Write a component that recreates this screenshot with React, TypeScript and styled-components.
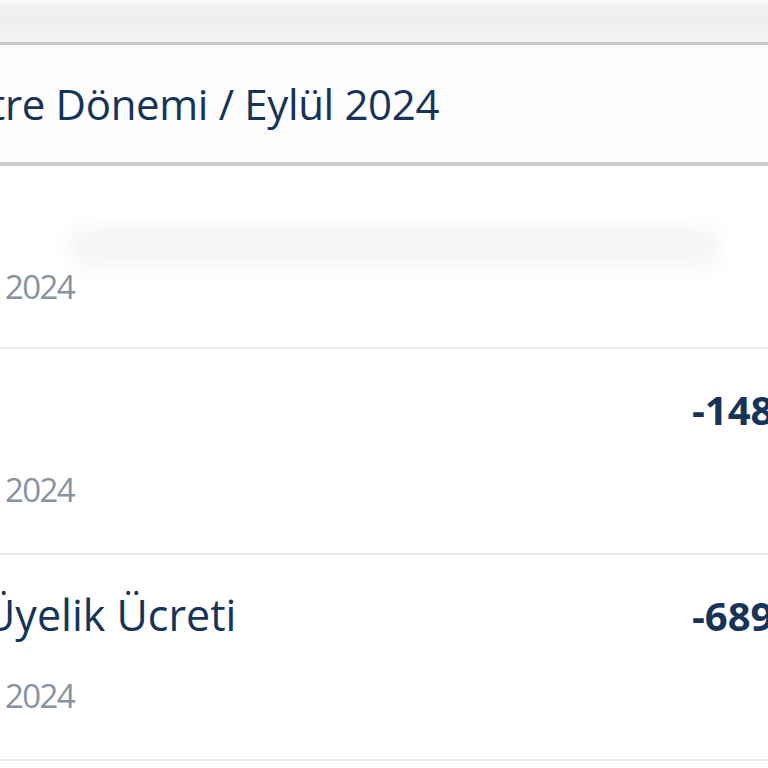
import React from "react";
import styled, { createGlobalStyle } from "styled-components";

const Global = createGlobalStyle`
  html, body { margin: 0; padding: 0; background: #ffffff; }
  body { font-family: "Open Sans", "Noto Sans", sans-serif; }
`;

const Screen = styled.div`
  width: 768px;
  height: 768px;
  overflow: hidden;
  background: #ffffff;
  display: flex;
  flex-direction: column;
`;

const TopStrip = styled.div`
  flex: none;
  height: 42px;
  background: linear-gradient(#fafafa 0px, #eef0f2 8px, #eceef0 20px, #f3f4f5 40px);
  border-bottom: 3px solid #c6c8cc;
`;

const Header = styled.header`
  flex: none;
  height: 117px;
  display: flex;
  align-items: center;
  background: #fdfdfd;
  border-bottom: 4px solid #c9cbce;
  overflow: hidden;
`;

const HeaderTitle = styled.h1`
  margin: 2px 0 0 -74px;
  font-size: 42px;
  line-height: 1.2;
  font-weight: 500;
  letter-spacing: -0.35px;
  color: #163358;
  white-space: nowrap;
`;

const List = styled.div`
  display: flex;
  flex-direction: column;
`;

const Row = styled.div<{ $height: number; $pad: number; $gap: number }>`
  box-sizing: border-box;
  height: ${(p) => p.$height}px;
  padding-top: ${(p) => p.$pad}px;
  border-bottom: 2px solid #ebebeb;
  display: grid;
  grid-template-columns: 692px 1fr;
  grid-template-rows: auto 1fr;
  row-gap: ${(p) => p.$gap}px;
`;

const Ghost = styled.div`
  grid-column: 1 / -1;
  height: 40px;
  margin: 0 48px 0 70px;
  background: #f5f5f6;
  border-radius: 14px;
  filter: blur(9px);
`;

const Title = styled.div`
  font-size: 43px;
  line-height: 1.2;
  font-weight: 500;
  color: #163358;
  white-space: nowrap;
  margin-left: -16px;
  min-height: 52px;
`;

const Amount = styled.div`
  margin-top: 3px;
  font-size: 40px;
  line-height: 1.2;
  font-weight: 700;
  color: #163358;
  white-space: nowrap;
`;

const DateText = styled.div<{ $first?: boolean }>`
  grid-column: 1 / -1;
  font-size: 33px;
  line-height: 1.2;
  letter-spacing: -1.6px;
  color: #8793a2;
  padding-left: 5px;
  margin-top: ${(p) => (p.$first ? "1px" : "0")};
`;

type Item = { title: string; amount: string };

const items: Item[] = [
  { title: "", amount: "-148,50 TL" },
  { title: "Üyelik Ücreti", amount: "-689,00 TL" },
];

export default function App() {
  return (
    <>
      <Global />
      <Screen>
        <TopStrip />
        <Header>
          <HeaderTitle>Ekstre Dönemi / Eylül 2024</HeaderTitle>
        </Header>
        <List>
          <Row $height={183} $pad={60} $gap={0}>
            <Ghost />
            <DateText $first>2024</DateText>
          </Row>
          {items.map((it) => (
            <Row key={it.amount} $height={206} $pad={34} $gap={35}>
              <Title>{it.title}</Title>
              <Amount>{it.amount}</Amount>
              <DateText>2024</DateText>
            </Row>
          ))}
        </List>
      </Screen>
    </>
  );
}
